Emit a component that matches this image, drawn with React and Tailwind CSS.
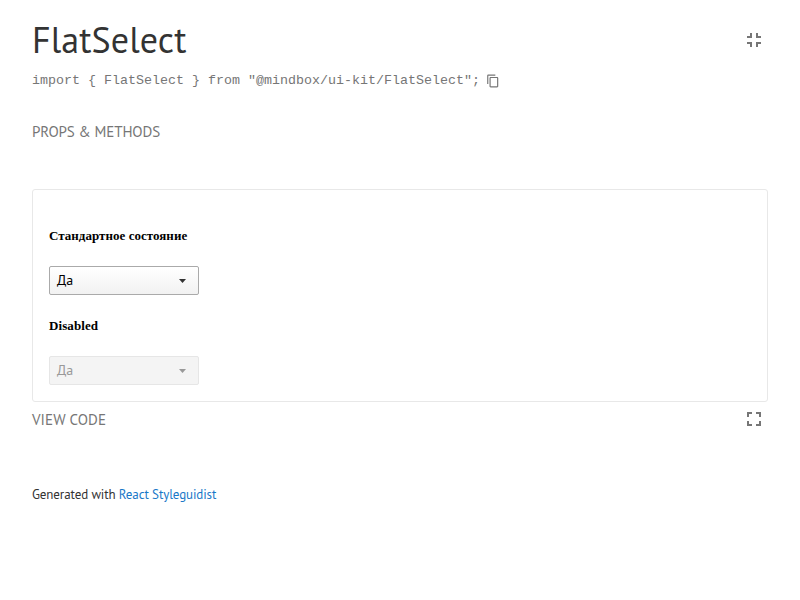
import { MdContentCopy, MdFullscreen, MdFullscreenExit } from "react-icons/md";

function Select({ disabled }) {
  return (
    <button
      type="button"
      disabled={disabled}
      className={
        "flex h-[29px] w-[150px] items-center justify-between rounded-xs border pr-3 pl-[7px] font-['PT_Sans','Noto_Sans',sans-serif] text-[14px] " +
        (disabled
          ? "border-[#e6e6e6] bg-[#f4f4f4] text-[#999]"
          : "border-[#aaa] bg-linear-to-b from-white to-[#f2f2f2] text-black")
      }
    >
      <span>Да</span>
      <svg width="7" height="4" viewBox="0 0 7 4" className={disabled ? "fill-[#999]" : "fill-[#333]"}>
        <path d="M0 0h7L3.5 4z" />
      </svg>
    </button>
  );
}

export default function App() {
  return (
    <main className="min-h-[600px] bg-white px-8 pt-4 font-['PT_Sans','Noto_Sans',sans-serif] text-[#333]">
      <header className="flex h-12 items-center justify-between">
        <h1 className="text-[36px] leading-[48px] tracking-[0.1px]">FlatSelect</h1>
        <MdFullscreenExit className="mr-0.5 size-6 text-[#767676]" />
      </header>
      <div className="mt-[7px] flex h-5 items-center font-['Liberation_Mono',monospace] text-[13.33px] leading-5 text-[#767676]">
        <span className="whitespace-pre">{'import { FlatSelect } from "@mindbox/ui-kit/FlatSelect";'}</span>
        <MdContentCopy className="ml-1.5 size-[14px]" />
      </div>
      <div className="mt-[31px] h-5 text-[15px] leading-5 tracking-[-0.12px] text-[#767676]">PROPS &amp; METHODS</div>
      <section className="mt-[47px] h-[213px] rounded-[3px] border border-[#e8e8e8] px-4 pt-[38px]">
        <h4 className="h-4 font-['Liberation_Serif',serif] text-[13px] leading-4 font-bold tracking-[0.03px] text-black">Стандартное состояние</h4>
        <div className="mt-[22px]"><Select /></div>
        <h4 className="mt-[23px] h-4 font-['Liberation_Serif',serif] text-[13px] leading-4 font-bold tracking-[0.08px] text-black">Disabled</h4>
        <div className="mt-[22px]"><Select disabled /></div>
      </section>
      <div className="mt-[5px] flex h-6 items-center justify-between text-[#767676]">
        <span className="mt-0.5 text-[15px] leading-5 tracking-[0.1px]">VIEW CODE</span>
        <MdFullscreen className="mr-0.5 size-6" />
      </div>
      <footer className="mt-[54px] text-[13px] leading-5 tracking-[-0.11px]">
        Generated with <a className="text-[#1978c8]">React Styleguidist</a>
      </footer>
    </main>
  );
}
